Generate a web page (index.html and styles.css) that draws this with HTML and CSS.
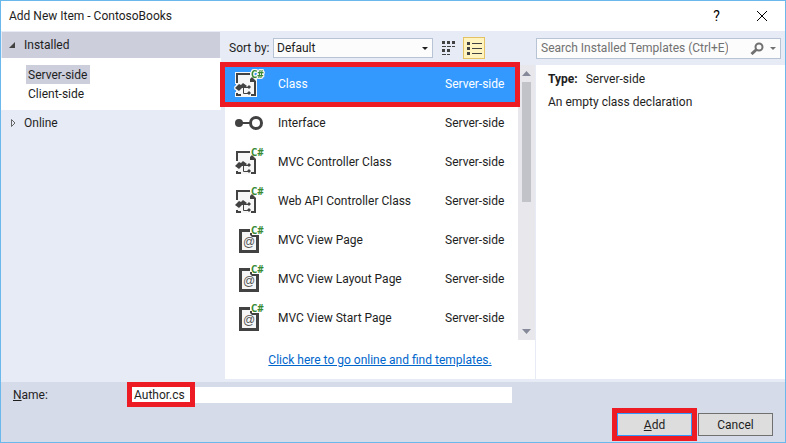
FILE: index.html
```html
<!DOCTYPE html>
<html lang="en">
<head>
<meta charset="utf-8">
<title>Add New Item - ContosoBooks</title>
<link rel="stylesheet" href="styles.css">
</head>
<body>
<svg class="defs" aria-hidden="true">
  <defs>
    <symbol id="class-shape" viewBox="0 0 32 32">
      <path fill="#f6f6f6" d="M4 6h13l6 6v16H4z"/>
      <path fill="#424242" d="M3 5h14v2H5v8H3zM19 9l4 4v15h-5v-2h3V14h-4v-3zM3 25h2v1h3v2H3z"/>
      <path fill="#424242" d="M2 20l4-4 2 1 2-2 4 3-2 2-2-1-4 4zM16 17l2 2-2 2-2-2zM16 23l2 2-2 2-2-2z"/>
      <path fill="none" stroke="#424242" d="M9 19.500h6M10.500 19v6.500H15"/>
    </symbol>
    <symbol id="view-shape" viewBox="0 0 32 32">
      <path fill="#424242" d="M6 5h11v4h2v2h7v18H6z"/>
      <path fill="#f6f6f6" d="M9 8h8v3l2 2h4v13H9z"/>
      <text x="16" y="22" text-anchor="middle" class="at">@</text>
    </symbol>
    <symbol id="lang" viewBox="0 0 32 32">
      <text x="18" y="10" class="lang">C#</text>
    </symbol>
    <symbol id="interface-shape" viewBox="0 0 32 32">
      <circle cx="6" cy="16" r="4" fill="#424242"/>
      <path stroke="#424242" stroke-width="2" d="M6 16h12"/>
      <circle cx="23" cy="16" r="5.500" fill="#fff" stroke="#424242" stroke-width="3"/>
    </symbol>
  </defs>
</svg>
<main class="dialog">
  <header class="titlebar">
    <h1>Add New Item - ContosoBooks</h1>
    <button class="caption" aria-label="Help">?</button>
    <button class="caption" aria-label="Close"><svg width="12" height="12" viewBox="0 0 12 12"><path d="M1 1l10 10M11 1L1 11" stroke="#000" fill="none"/></svg></button>
  </header>
  <div class="body">
    <nav class="tree">
      <div class="node open"><svg width="8" height="8" viewBox="0 0 8 8"><path d="M7 1v6H1z" fill="#424242"/></svg>Installed</div>
      <ul>
        <li><a href="#server" class="current">Server-side</a></li>
        <li><a href="#client">Client-side</a></li>
      </ul>
      <div class="node"><svg width="8" height="8" viewBox="0 0 8 8"><path d="M3.500 0.500v7L7 4z" fill="none" stroke="#666"/></svg>Online</div>
    </nav>
    <section class="center">
      <div class="tools">
        <label for="sort">Sort by:</label>
        <span class="combo"><select id="sort"><option>Default</option></select><svg width="6" height="3" viewBox="0 0 6 3"><path d="M0 0h6L3 3z" fill="#1e1e1e"/></svg></span>
        <button class="mode" aria-label="Small icons"><svg width="14" height="15" viewBox="0 0 14 15"><path fill="#424242" d="M0 0h3v3H0zM5 0h3v3H5zM10 0h3v3h-3zM0 8h3v3H0zM5 8h3v3H5zM0 5h4v1H0zM5 5h4v1H5zM10 5h3v1h-3zM0 13h4v1H0zM5 13h3v1H5z"/></svg></button>
        <button class="mode on" aria-label="List"><svg width="15" height="13" viewBox="0 0 15 13"><path fill="#424242" d="M0 0h3v3H0zM0 5h3v3H0zM0 10h3v3H0zM5 1h10v1H5zM5 6h10v1H5zM5 11h10v1H5z"/></svg></button>
      </div>
      <div class="results">
        <div class="listing">
          <ul class="items">
            <li class="selected"><svg class="icon"><use href="#class-shape"/><use href="#lang"/></svg><span>Class</span><span>Server-side</span></li>
            <li><svg class="icon"><use href="#interface-shape"/></svg><span>Interface</span><span>Server-side</span></li>
            <li><svg class="icon"><use href="#class-shape"/><use href="#lang"/></svg><span>MVC Controller Class</span><span>Server-side</span></li>
            <li><svg class="icon"><use href="#class-shape"/><use href="#lang"/></svg><span>Web API Controller Class</span><span>Server-side</span></li>
            <li><svg class="icon"><use href="#view-shape"/><use href="#lang"/></svg><span>MVC View Page</span><span>Server-side</span></li>
            <li><svg class="icon"><use href="#view-shape"/><use href="#lang"/></svg><span>MVC View Layout Page</span><span>Server-side</span></li>
            <li><svg class="icon"><use href="#view-shape"/><use href="#lang"/></svg><span>MVC View Start Page</span><span>Server-side</span></li>
          </ul>
          <div class="scroll" aria-hidden="true">
            <svg width="9" height="5" viewBox="0 0 9 5"><path d="M0 5h9L4.500 0z" fill="#868999"/></svg>
            <div class="thumb"></div>
            <svg width="9" height="5" viewBox="0 0 9 5"><path d="M0 0h9L4.500 5z" fill="#868999"/></svg>
          </div>
        </div>
        <p class="more"><a href="#online">Click here to go online and find templates.</a></p>
      </div>
    </section>
    <aside class="details">
      <div class="tools">
        <div class="search">
          <input type="search" aria-label="Search Installed Templates" placeholder="Search Installed Templates (Ctrl+E)">
          <svg width="14" height="13" viewBox="0 0 14 13"><circle cx="9" cy="5" r="3.500" fill="none" stroke="#717171" stroke-width="2"/><path d="M6.500 7.500L1.500 12" stroke="#717171" stroke-width="3"/></svg>
          <svg width="6" height="3" viewBox="0 0 6 3"><path d="M0 0h6L3 3z" fill="#717171"/></svg>
        </div>
      </div>
      <div class="info">
        <p><b>Type:</b><span>Server-side</span></p>
        <p>An empty class declaration</p>
      </div>
    </aside>
  </div>
  <footer>
    <div class="name"><label for="name"><u>N</u>ame:</label><div class="field"><input id="name" value="Author.cs"></div></div>
    <div class="buttons"><button class="primary"><u>A</u>dd</button><button>Cancel</button></div>
  </footer>
</main>
</body>
</html>
```
FILE: styles.css
```css
*, ::before, ::after { box-sizing: border-box; }
body, h1, ul, p { margin: 0; padding: 0; }
ul { list-style: none; }
body, button, input, select {
  font-family: Roboto, "Open Sans", sans-serif;
  font-size: 12px;
  line-height: 16px;
  color: #1e1e1e;
}
button { padding: 0; border: 0; background: none; }
svg { flex: none; }
.defs { position: absolute; width: 0; height: 0; }
.dialog {
  min-height: 100vh;
  display: flex;
  flex-direction: column;
  border: 1px solid #6bb8ec;
  background: #e6ebf5;
}
.titlebar { display: flex; align-items: center; height: 30px; padding: 0 8px; background: #fff; }
.titlebar h1 { flex: 1; font-size: 12px; font-weight: 400; }
.caption { width: 45px; display: flex; justify-content: center; font-size: 14px; color: #000; }
.caption:last-child { width: 30px; margin-left: 8px; }
.body { flex: 1; display: grid; grid-template-columns: 220px 315px 1fr; padding-bottom: 3px; }
.tree { padding-top: 1px; }
.node { display: flex; align-items: center; gap: 8px; height: 26px; padding: 0 7px; }
.node.open { margin: 0 1px; padding-left: 6px; background: #cccedb; }
.tree ul { padding: 7px 25px; background: #fff; }
.tree li { height: 19px; }
.tree a { display: inline-block; padding: 2px 3px 1px 2px; color: inherit; text-decoration: none; }
.tree .current { background: #cccedb; }
.center { display: flex; flex-direction: column; padding-left: 4px; border-right: 1px solid #e6ebf5; }
.tools { display: flex; align-items: center; height: 34px; }
.center .tools { padding-left: 4px; }
.tools label { width: 44px; white-space: nowrap; }
.combo { width: 160px; display: flex; align-items: center; height: 20px; padding-right: 4px; border: 1px solid #b8c3d6; background: #fcfcfc; }
.combo select { flex: 1; appearance: none; border: 0; padding: 0 3px; background: none; }
.mode { display: flex; align-items: center; justify-content: center; width: 22px; height: 22px; margin-left: 5px; }
.mode.on { margin-left: 3px; border: 1px solid #e5c365; background: #fff4bf; }
.results { flex: 1; display: flex; flex-direction: column; background: #fff; }
.listing { display: flex; }
.items { flex: 1; padding-bottom: 2px; }
.items li { position: relative; display: grid; grid-template-columns: 45px 1fr 73px; align-items: center; height: 39px; padding: 0 0 2px 8px; }
.items .selected { color: #fff; background: #3399ff; }
.selected::after { content: ""; position: absolute; inset: -3px -2px -3px -5px; border: 5px solid #ed1c24; }
.icon { width: 32px; height: 32px; }
.selected .icon { filter: drop-shadow(1px 0 #f6f6f6) drop-shadow(-1px 0 #f6f6f6) drop-shadow(0 1px #f6f6f6) drop-shadow(0 -1px #f6f6f6); }
.lang { font: bold 10px "Open Sans", sans-serif; fill: #388a34; }
.at { font: 12px "Liberation Sans", sans-serif; fill: #555; }
.scroll { width: 17px; display: flex; flex-direction: column; align-items: center; padding: 6px 0; background: #e8e8ec; }
.thumb { width: 9px; height: 120px; margin: 6px 0 auto; background: #c2c3c9; }
.more { padding-top: 12px; text-align: center; }
.more a { color: #0066cc; }
.details { display: flex; flex-direction: column; }
.search { flex: 1; display: flex; align-items: center; gap: 6px; height: 21px; margin-right: 4px; padding-right: 4px; border: 1px solid #b8c3d6; background: #fcfcfc; }
.search input { flex: 1; min-width: 0; padding: 0 4px; border: 0; background: none; appearance: none; outline: 0; }
.search input::placeholder { color: #717171; opacity: 1; }
.info { flex: 1; padding: 6px 12px; background: #fff; }
.info p { margin-bottom: 7px; }
.info span { margin-left: 8px; }
footer { padding: 5px 12px 6px; background: #d6dbe9; }
.name { display: flex; align-items: center; }
.name label { width: 119px; }
.field { position: relative; flex: 0 1 380px; display: flex; }
.field input { flex: 1; min-width: 0; height: 16px; padding: 0 2px; border: 0; background: #fff; }
.field::after { content: ""; position: absolute; inset: -5px auto -4px -5px; width: 68px; border: 5px solid #ed1c24; pointer-events: none; }
.buttons { display: flex; justify-content: flex-end; gap: 6px; padding-top: 10px; }
.buttons button { width: 75px; height: 23px; border: 1px solid #707070; background: #ddd; }
.buttons .primary { border-color: #3399ff; outline: 5px solid #ed1c24; }
```
